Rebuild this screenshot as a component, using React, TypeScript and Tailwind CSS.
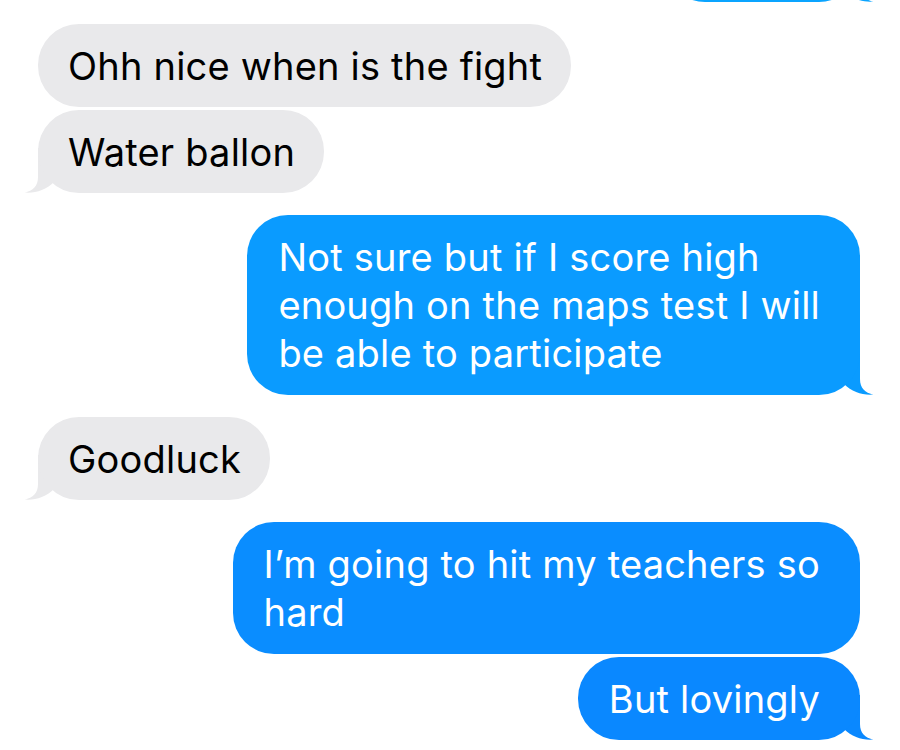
import type { ReactNode } from "react";

type Side = "in" | "out";

function Tail({ side, color }: { side: Side; color: string }) {
  return (
    <svg
      width="45"
      height="45"
      viewBox="0 0 45 45"
      className={
        side === "out"
          ? "absolute bottom-0 right-[-15px]"
          : "absolute bottom-0 left-[-15px] -scale-x-100"
      }
    >
      <path
        d="M30 0 L30 29 C30 38 35 43 43.5 44.5 C33 45.5 22 42 14 34 L14 0 Z"
        fill={color}
      />
    </svg>
  );
}

function Bubble({
  side,
  color,
  tail,
  multi,
  className = "",
  children,
}: {
  side: Side;
  color: string;
  tail?: boolean;
  multi?: boolean;
  className?: string;
  children: ReactNode;
}) {
  const out = side === "out";
  return (
    <div
      className={`relative w-fit ${out ? "self-end mr-[40px]" : "ml-[38px]"} ${className}`}
    >
      <div
        className={`relative z-10 rounded-[41px] pt-[18px] ${multi ? "pb-[18px]" : "pb-[17px]"} ${
          out ? "pl-[31px] pr-[40px] text-white" : "pl-[30px] pr-[29px] text-black"
        } text-[38px] leading-[48px] tracking-[0.2px]`}
        style={{ backgroundColor: color }}
      >
        {children}
      </div>
      {tail && <Tail side={side} color={color} />}
    </div>
  );
}

export default function App() {
  const gray = "#e9e9eb";
  return (
    <div className="h-[750px] w-[900px] overflow-hidden bg-white font-['Inter','Liberation_Sans',sans-serif]">
      <div className="flex flex-col">
        <div className="relative mr-[40px] -mt-[81px] h-[83px] w-[196px] self-end">
          <div className="h-full w-full rounded-[41px] bg-[#0aa4ff]" />
          <Tail side="out" color="#0aa4ff" />
        </div>

        <Bubble side="in" color={gray} className="mt-[22px]">
          Ohh nice when is the fight
        </Bubble>
        <Bubble side="in" color={gray} tail className="mt-[3px]">
          Water ballon
        </Bubble>

        <Bubble side="out" color="#0a9bff" tail multi className="mt-[22px]">
          Not sure but if I score high
          <br />
          enough on the maps test I will
          <br />
          be able to participate
        </Bubble>

        <Bubble side="in" color={gray} tail className="mt-[22px]">
          Goodluck
        </Bubble>

        <Bubble side="out" color="#0a8dff" multi className="mt-[22px]">
          I’m going to hit my teachers so
          <br />
          hard
        </Bubble>
        <Bubble side="out" color="#0a88ff" tail className="mt-[3px]">
          But lovingly
        </Bubble>
      </div>
    </div>
  );
}
